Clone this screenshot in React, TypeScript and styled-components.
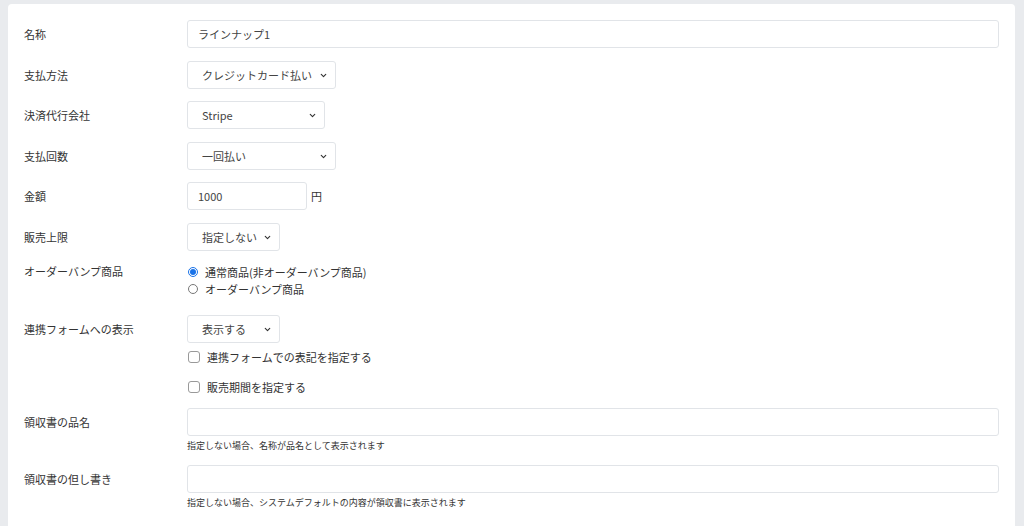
import styled, { createGlobalStyle } from 'styled-components'
import { ChevronDown } from 'lucide-react'

const GlobalStyle = createGlobalStyle`
  html, body {
    margin: 0;
    padding: 0;
    background: #e9ebee;
    font-family: "Noto Sans CJK JP", "Noto Sans", sans-serif;
    color: #333;
  }
`

const Page = styled.div`
  padding: 4px 9px 0 8px;
  height: 526px;
  box-sizing: border-box;
  overflow: hidden;
`

const Card = styled.div`
  background: #fff;
  border-radius: 4px 4px 0 0;
  padding: 16px 16px 30px 16px;
  min-height: 530px;
  box-sizing: border-box;
`

const Row = styled.div<{ $gap?: number }>`
  display: grid;
  grid-template-columns: 163px 1fr;
  align-items: start;
  margin-bottom: ${(p) => (p.$gap ?? 13)}px;
`

const Label = styled.div<{ $lh?: number }>`
  font-size: 11px;
  line-height: ${(p) => p.$lh ?? 28}px;
  color: #333;
`

const Field = styled.div<{ $stretch?: boolean }>`
  display: flex;
  flex-direction: column;
  align-items: ${(p) => (p.$stretch ? 'stretch' : 'flex-start')};
`

const Inline = styled.div`
  display: flex;
  align-items: center;
  gap: 4px;
`

const TextInput = styled.input<{ $w?: number }>`
  box-sizing: border-box;
  width: ${(p) => (p.$w ? `${p.$w}px` : '100%')};
  height: 28px;
  border: 1px solid #e1e4e8;
  border-radius: 3px;
  padding: 0 10px;
  font-family: inherit;
  font-size: 11px;
  color: #444;
  background: #fff;
  outline: none;
`

const SelectWrap = styled.div<{ $w: number }>`
  position: relative;
  width: ${(p) => p.$w}px;
  height: 28px;
`

const Select = styled.select`
  appearance: none;
  box-sizing: border-box;
  width: 100%;
  height: 28px;
  border: 1px solid #e1e4e8;
  border-radius: 3px;
  padding: 0 8px 0 14px;
  font-family: inherit;
  font-size: 11px;
  color: #444;
  background: #fff;
  outline: none;
`

const Chevron = styled(ChevronDown)`
  position: absolute;
  right: 8px;
  top: 10px;
  pointer-events: none;
  color: #333;
`

const Unit = styled.span`
  font-size: 11px;
  color: #333;
`

const RadioLine = styled.label`
  display: flex;
  align-items: center;
  height: 17px;
  font-size: 11px;
  color: #333;
`

const RadioDot = styled.span<{ $on?: boolean }>`
  box-sizing: border-box;
  width: 10px;
  height: 10px;
  margin: 0 7px 0 1px;
  border-radius: 50%;
  border: 1px solid ${(p) => (p.$on ? '#1a73e8' : '#777')};
  background: #fff;
  display: flex;
  align-items: center;
  justify-content: center;
  &::after {
    content: '';
    width: 6px;
    height: 6px;
    border-radius: 50%;
    background: ${(p) => (p.$on ? '#1a73e8' : 'transparent')};
  }
`

const CheckLine = styled.label<{ $top: number }>`
  display: flex;
  align-items: center;
  margin-top: ${(p) => p.$top}px;
  height: 20px;
  font-size: 11px;
  color: #333;
`

const CheckBox = styled.span`
  box-sizing: border-box;
  width: 12px;
  height: 12px;
  margin: 0 7px 0 1px;
  border: 1px solid #999;
  border-radius: 3px;
  background: #fff;
`

const Help = styled.div`
  font-size: 9px;
  line-height: 12px;
  margin-top: 4px;
  color: #333;
`

const SelectBox = ({ w, value }: { w: number; value: string }) => (
  <SelectWrap $w={w}>
    <Select defaultValue={value}>
      <option>{value}</option>
    </Select>
    <Chevron size={9} strokeWidth={3} />
  </SelectWrap>
)

export default function App() {
  return (
    <>
      <GlobalStyle />
      <Page>
        <Card>
          <Row $gap={13}>
            <Label>名称</Label>
            <Field $stretch>
              <TextInput defaultValue="ラインナップ1" />
            </Field>
          </Row>
          <Row $gap={12}>
            <Label>支払方法</Label>
            <Field>
              <SelectBox w={149} value="クレジットカード払い" />
            </Field>
          </Row>
          <Row $gap={13}>
            <Label>決済代行会社</Label>
            <Field>
              <SelectBox w={138} value="Stripe" />
            </Field>
          </Row>
          <Row $gap={12}>
            <Label>支払回数</Label>
            <Field>
              <SelectBox w={149} value="一回払い" />
            </Field>
          </Row>
          <Row $gap={13}>
            <Label>金額</Label>
            <Inline>
              <TextInput $w={120} defaultValue="1000" />
              <Unit>円</Unit>
            </Inline>
          </Row>
          <Row $gap={12}>
            <Label>販売上限</Label>
            <Field>
              <SelectBox w={93} value="指定しない" />
            </Field>
          </Row>
          <Row $gap={18}>
            <Label $lh={17}>オーダーバンプ商品</Label>
            <Field>
              <RadioLine>
                <RadioDot $on />
                通常商品(非オーダーバンプ商品)
              </RadioLine>
              <RadioLine>
                <RadioDot />
                オーダーバンプ商品
              </RadioLine>
            </Field>
          </Row>
          <Row $gap={11}>
            <Label>連携フォームへの表示</Label>
            <Field>
              <SelectBox w={93} value="表示する" />
              <CheckLine $top={4}>
                <CheckBox />
                連携フォームでの表記を指定する
              </CheckLine>
              <CheckLine $top={10}>
                <CheckBox />
                販売期間を指定する
              </CheckLine>
            </Field>
          </Row>
          <Row $gap={13}>
            <Label>領収書の品名</Label>
            <Field $stretch>
              <TextInput />
              <Help>指定しない場合、名称が品名として表示されます</Help>
            </Field>
          </Row>
          <Row>
            <Label>領収書の但し書き</Label>
            <Field $stretch>
              <TextInput />
              <Help>指定しない場合、システムデフォルトの内容が領収書に表示されます</Help>
            </Field>
          </Row>
        </Card>
      </Page>
    </>
  )
}
